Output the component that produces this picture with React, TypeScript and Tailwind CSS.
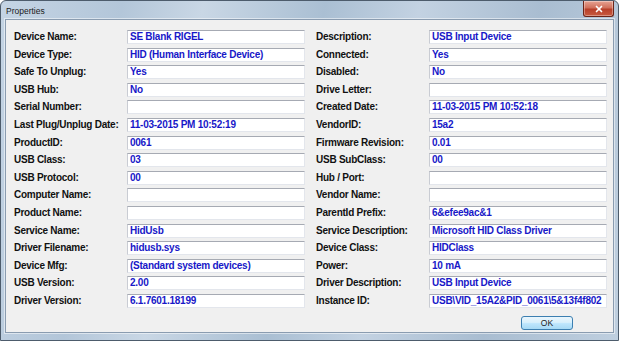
import { X } from "lucide-react";

type Field = { label: string; value: string };

const leftFields: Field[] = [
  { label: "Device Name:", value: "SE Blank RIGEL" },
  { label: "Device Type:", value: "HID (Human Interface Device)" },
  { label: "Safe To Unplug:", value: "Yes" },
  { label: "USB Hub:", value: "No" },
  { label: "Serial Number:", value: "" },
  { label: "Last Plug/Unplug Date:", value: "11-03-2015 PM 10:52:19" },
  { label: "ProductID:", value: "0061" },
  { label: "USB Class:", value: "03" },
  { label: "USB Protocol:", value: "00" },
  { label: "Computer Name:", value: "" },
  { label: "Product Name:", value: "" },
  { label: "Service Name:", value: "HidUsb" },
  { label: "Driver Filename:", value: "hidusb.sys" },
  { label: "Device Mfg:", value: "(Standard system devices)" },
  { label: "USB Version:", value: "2.00" },
  { label: "Driver Version:", value: "6.1.7601.18199" },
];

const rightFields: Field[] = [
  { label: "Description:", value: "USB Input Device" },
  { label: "Connected:", value: "Yes" },
  { label: "Disabled:", value: "No" },
  { label: "Drive Letter:", value: "" },
  { label: "Created Date:", value: "11-03-2015 PM 10:52:18" },
  { label: "VendorID:", value: "15a2" },
  { label: "Firmware Revision:", value: "0.01" },
  { label: "USB SubClass:", value: "00" },
  { label: "Hub / Port:", value: "" },
  { label: "Vendor Name:", value: "" },
  { label: "ParentId Prefix:", value: "6&efee9ac&1" },
  { label: "Service Description:", value: "Microsoft HID Class Driver" },
  { label: "Device Class:", value: "HIDClass" },
  { label: "Power:", value: "10 mA" },
  { label: "Driver Description:", value: "USB Input Device" },
  { label: "Instance ID:", value: "USB\\VID_15A2&PID_0061\\5&13f4f802" },
];

function FieldRow({ label, value }: Field) {
  return (
    <div className="flex items-center h-[14px]">
      <span className="w-[113px] shrink-0 text-[10px] leading-[14px] font-bold tracking-[-0.25px] text-[#111] whitespace-nowrap">
        {label}
      </span>
      <div className="w-[178px] h-[14px] bg-white border border-[#e3e6ec] border-t-[#a6aab3] border-l-[#c9ccd3] pl-[2px] overflow-hidden">
        <span className="block text-[10px] leading-[12px] font-bold tracking-[-0.25px] text-[#1818c8] whitespace-nowrap">
          {value}
        </span>
      </div>
    </div>
  );
}

function Column({ fields }: { fields: Field[] }) {
  return (
    <div className="flex flex-col gap-[3.6px]">
      {fields.map((f) => (
        <FieldRow key={f.label} {...f} />
      ))}
    </div>
  );
}

export default function App() {
  return (
    <div
      className="w-[619px] h-[341px] flex flex-col border border-[#4d5c6c] rounded-t-[6px] overflow-hidden bg-[linear-gradient(100deg,#c4d4e4_0%,#b3c6d9_18%,#c9d7e5_30%,#aabfd3_48%,#c3d2e2_62%,#a9bdd1_80%,#bfcfdf_100%)]"
      style={{ fontFamily: '"Liberation Sans", Arial, sans-serif' }}
    >
      {/* Title bar */}
      <div className="h-[18px] shrink-0 flex items-start justify-between pl-[5px] pr-[4px]">
        <span className="text-[8.5px] leading-[20px] text-[#1b1b1b] font-normal">Properties</span>
        <button className="w-[31px] h-[16px] flex items-center justify-center rounded-b-[3px] border border-t-0 border-[#6b2418] bg-[linear-gradient(180deg,#e6a393_0%,#d0705c_45%,#b8402a_55%,#c85a3f_100%)] shadow-[inset_0_0_0_1px_rgba(255,255,255,0.35)]">
          <X className="w-[10px] h-[10px] text-white" strokeWidth={4} />
        </button>
      </div>

      {/* Client area */}
      <div className="flex-1 mx-[4px] mb-[7px] bg-[#f0f0f0] border border-[#8a9cb0] shadow-[0_0_0_1px_rgba(255,255,255,0.5)] flex flex-col pt-[10px] pl-[8px]">
        <div className="flex gap-[11px]">
          <Column fields={leftFields} />
          <Column fields={rightFields} />
        </div>

        <div className="flex justify-end pr-[40px] mt-[8px]">
          <button className="w-[52px] h-[14px] rounded-[3px] border border-[#3c7fb1] bg-[linear-gradient(180deg,#eaf6fd_0%,#d9f0fc_45%,#bee6fd_55%,#a7d9f5_100%)] text-[8.5px] leading-[12px] text-[#1b1b1b]">
            OK
          </button>
        </div>
      </div>
    </div>
  );
}
